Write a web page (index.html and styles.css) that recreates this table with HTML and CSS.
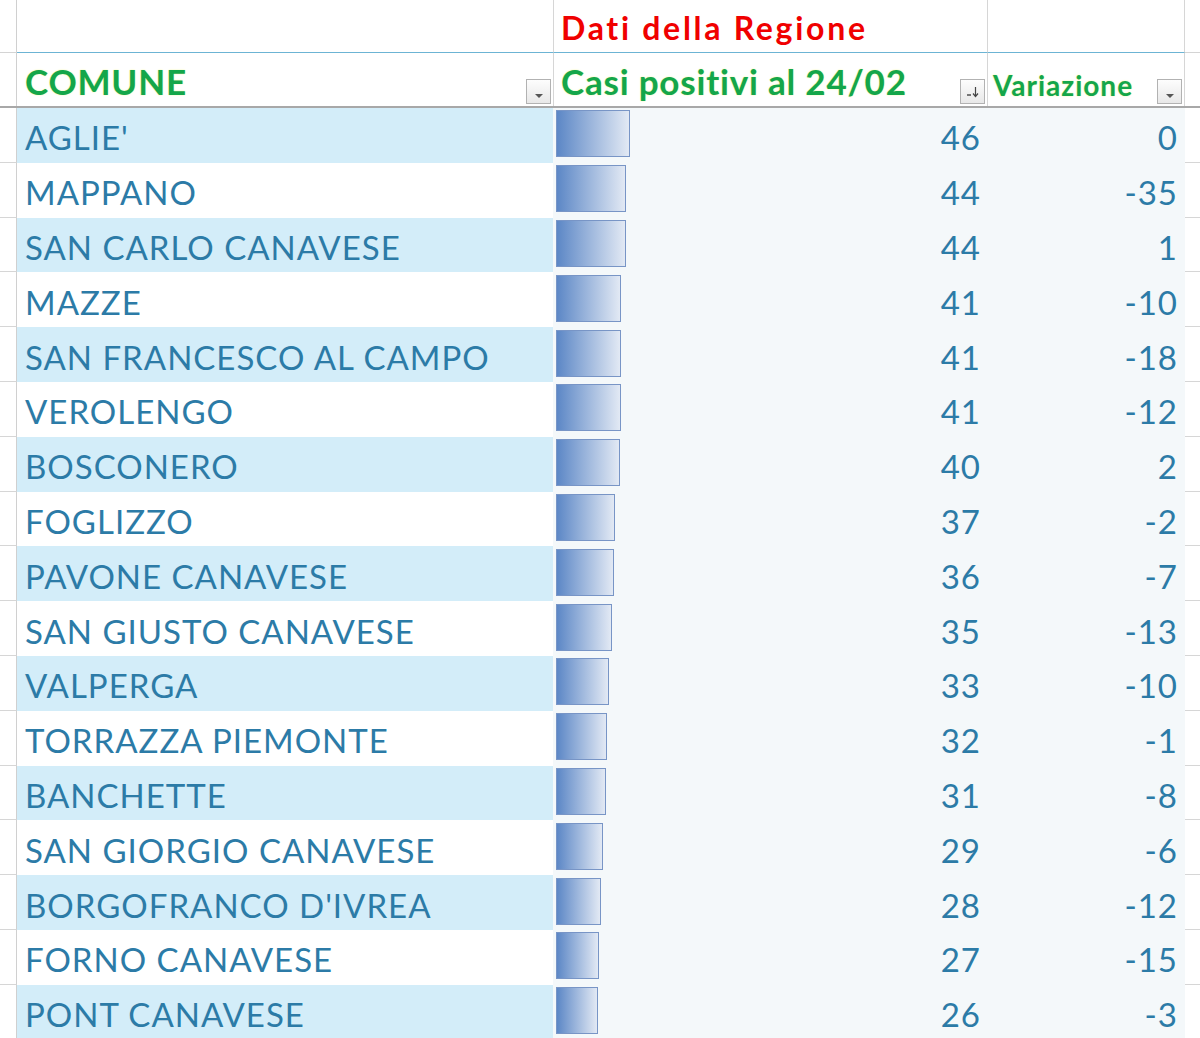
FILE: index.html
```html
<!DOCTYPE html>
<html lang="it">
<head>
<meta charset="utf-8">
<title>Casi positivi</title>
<link rel="stylesheet" href="styles.css">
</head>
<body>
<div class="sheet">
  <div class="row r-title">
    <div class="gut"></div>
    <div class="cell ca"></div>
    <div class="cell cb title">Dati della Regione</div>
    <div class="cell cc"></div>
    <div class="rest"></div>
  </div>
  <div class="row r-head">
    <div class="gut"></div>
    <div class="cell ca hd"><span class="hd-text">COMUNE</span><span class="flt"><svg width="10" height="6" viewBox="0 0 10 6"><path d="M1 1h8L5 5z" fill="#555"/></svg></span></div>
    <div class="cell cb hd"><span class="hd-text">Casi positivi al 24/02</span><span class="flt"><svg width="16" height="14" viewBox="0 0 16 14"><path d="M2 10h4" stroke="#444" stroke-width="1.4"/><path d="M10.5 2v9" stroke="#444" stroke-width="1.2"/><path d="M8 8.5l2.5 3 2.5-3" fill="none" stroke="#444" stroke-width="1.2"/></svg></span></div>
    <div class="cell cc hd"><span class="hd-text small">Variazione</span><span class="flt"><svg width="10" height="6" viewBox="0 0 10 6"><path d="M1 1h8L5 5z" fill="#555"/></svg></span></div>
    <div class="rest"></div>
  </div>

  <div class="row data odd"><div class="gut"></div><div class="cell ca name">AGLIE'</div><div class="cell cb num"><span class="bar" style="width:74px"></span><span>46</span></div><div class="cell cc num">0</div><div class="rest"></div></div>
  <div class="row data"><div class="gut"></div><div class="cell ca name">MAPPANO</div><div class="cell cb num"><span class="bar" style="width:70px"></span><span>44</span></div><div class="cell cc num">-35</div><div class="rest"></div></div>
  <div class="row data odd"><div class="gut"></div><div class="cell ca name">SAN CARLO CANAVESE</div><div class="cell cb num"><span class="bar" style="width:70px"></span><span>44</span></div><div class="cell cc num">1</div><div class="rest"></div></div>
  <div class="row data"><div class="gut"></div><div class="cell ca name">MAZZE</div><div class="cell cb num"><span class="bar" style="width:65px"></span><span>41</span></div><div class="cell cc num">-10</div><div class="rest"></div></div>
  <div class="row data odd"><div class="gut"></div><div class="cell ca name">SAN FRANCESCO AL CAMPO</div><div class="cell cb num"><span class="bar" style="width:65px"></span><span>41</span></div><div class="cell cc num">-18</div><div class="rest"></div></div>
  <div class="row data"><div class="gut"></div><div class="cell ca name">VEROLENGO</div><div class="cell cb num"><span class="bar" style="width:65px"></span><span>41</span></div><div class="cell cc num">-12</div><div class="rest"></div></div>
  <div class="row data odd"><div class="gut"></div><div class="cell ca name">BOSCONERO</div><div class="cell cb num"><span class="bar" style="width:64px"></span><span>40</span></div><div class="cell cc num">2</div><div class="rest"></div></div>
  <div class="row data"><div class="gut"></div><div class="cell ca name">FOGLIZZO</div><div class="cell cb num"><span class="bar" style="width:59px"></span><span>37</span></div><div class="cell cc num">-2</div><div class="rest"></div></div>
  <div class="row data odd"><div class="gut"></div><div class="cell ca name">PAVONE CANAVESE</div><div class="cell cb num"><span class="bar" style="width:58px"></span><span>36</span></div><div class="cell cc num">-7</div><div class="rest"></div></div>
  <div class="row data"><div class="gut"></div><div class="cell ca name">SAN GIUSTO CANAVESE</div><div class="cell cb num"><span class="bar" style="width:56px"></span><span>35</span></div><div class="cell cc num">-13</div><div class="rest"></div></div>
  <div class="row data odd"><div class="gut"></div><div class="cell ca name">VALPERGA</div><div class="cell cb num"><span class="bar" style="width:53px"></span><span>33</span></div><div class="cell cc num">-10</div><div class="rest"></div></div>
  <div class="row data"><div class="gut"></div><div class="cell ca name">TORRAZZA PIEMONTE</div><div class="cell cb num"><span class="bar" style="width:51px"></span><span>32</span></div><div class="cell cc num">-1</div><div class="rest"></div></div>
  <div class="row data odd"><div class="gut"></div><div class="cell ca name">BANCHETTE</div><div class="cell cb num"><span class="bar" style="width:50px"></span><span>31</span></div><div class="cell cc num">-8</div><div class="rest"></div></div>
  <div class="row data"><div class="gut"></div><div class="cell ca name">SAN GIORGIO CANAVESE</div><div class="cell cb num"><span class="bar" style="width:47px"></span><span>29</span></div><div class="cell cc num">-6</div><div class="rest"></div></div>
  <div class="row data odd"><div class="gut"></div><div class="cell ca name">BORGOFRANCO D'IVREA</div><div class="cell cb num"><span class="bar" style="width:45px"></span><span>28</span></div><div class="cell cc num">-12</div><div class="rest"></div></div>
  <div class="row data"><div class="gut"></div><div class="cell ca name">FORNO CANAVESE</div><div class="cell cb num"><span class="bar" style="width:43px"></span><span>27</span></div><div class="cell cc num">-15</div><div class="rest"></div></div>
  <div class="row data odd"><div class="gut"></div><div class="cell ca name">PONT CANAVESE</div><div class="cell cb num"><span class="bar" style="width:42px"></span><span>26</span></div><div class="cell cc num">-3</div><div class="rest"></div></div>
</div>
</body>
</html>
```
FILE: styles.css
```css
html, body {
  margin: 0;
  padding: 0;
  background: #ffffff;
}
body {
  font-family: Lato, "Open Sans", sans-serif;
  width: 1200px;
  height: 1038px;
  overflow: hidden;
}
.sheet {
  display: flex;
  flex-direction: column;
}
.row {
  display: grid;
  grid-template-columns: 17px 536px 434px 198px 1fr;
}
.gut {
  border-right: 1px solid #d0d0d0;
}
.r-title {
  height: 52px;
  border-bottom: 1px solid #d4d4d4;
}
.r-title .cell {
  border-bottom: 1px solid #6cb4d4;
  margin-bottom: -1px;
}
.r-title .cb,
.r-title .cc {
  border-left: 1px solid #d6d6d6;
}
.r-title .cc {
  border-right: 1px solid #d6d6d6;
}
.title {
  color: #f00000;
  font-weight: 700;
  font-size: 32px;
  letter-spacing: 2.7px;
  padding: 8px 0 0 7px;
  white-space: nowrap;
}
.r-head {
  height: 53px;
  border-bottom: 2px solid #a8a8a8;
}
.r-head .cb,
.r-head .cc {
  border-left: 1px solid #d6d6d6;
}
.r-head .cc {
  border-right: 1px solid #d6d6d6;
}
.hd {
  display: flex;
  align-items: flex-end;
  justify-content: space-between;
  padding: 0 2px 2px 7px;
}
.hd-text {
  color: #14a64a;
  font-weight: 700;
  font-size: 35px;
  letter-spacing: 0.8px;
  line-height: 1;
  padding-bottom: 5px;
  white-space: nowrap;
  text-shadow: 0 0 2px #f2f7b0, 0 0 1px #f6fbc4;
}
.hd-text.small {
  font-size: 28px;
  letter-spacing: 1px;
  padding-bottom: 5px;
}
.ca.hd { padding-left: 8px; }
.cc.hd { padding-left: 5px; }
.flt {
  border: 1px solid #b2b2b2;
  background: linear-gradient(#fdfdfd, #e8e8e8);
  display: flex;
  align-items: flex-end;
  justify-content: center;
  padding-bottom: 4px;
  box-sizing: border-box;
  width: 25px;
  height: 25px;
  flex: none;
}
.data {
  height: 54.8px;
}
.data .gut {
  border-bottom: 1px solid #d6d6d6;
}
.data .rest {
  border-bottom: 1px solid #d6d6d6;
}
.data .cell {
  color: #2c7ba7;
  font-size: 33px;
  letter-spacing: 1px;
  line-height: 1;
  white-space: nowrap;
}
.data .ca {
  background: #ffffff;
  display: flex;
  align-items: center;
  padding: 5px 0 0 8px;
}
.data.odd .ca {
  background: #d3edf9;
}
.data .cb,
.data .cc {
  background: #f4f8fa;
}
.num {
  display: flex;
  align-items: center;
  justify-content: flex-end;
  padding-top: 5px;
}
.data .cb {
  padding: 0 6px 0 3px;
}
.data .cb span:last-child {
  padding-top: 5px;
}
.data .cc {
  padding-right: 7px;
}
.bar {
  height: 47px;
  box-sizing: border-box;
  border: 1.5px solid #7895c6;
  background: linear-gradient(90deg, #5c87c6, #e2e9f4);
  margin-right: auto;
  margin-top: -3px;
}
```
